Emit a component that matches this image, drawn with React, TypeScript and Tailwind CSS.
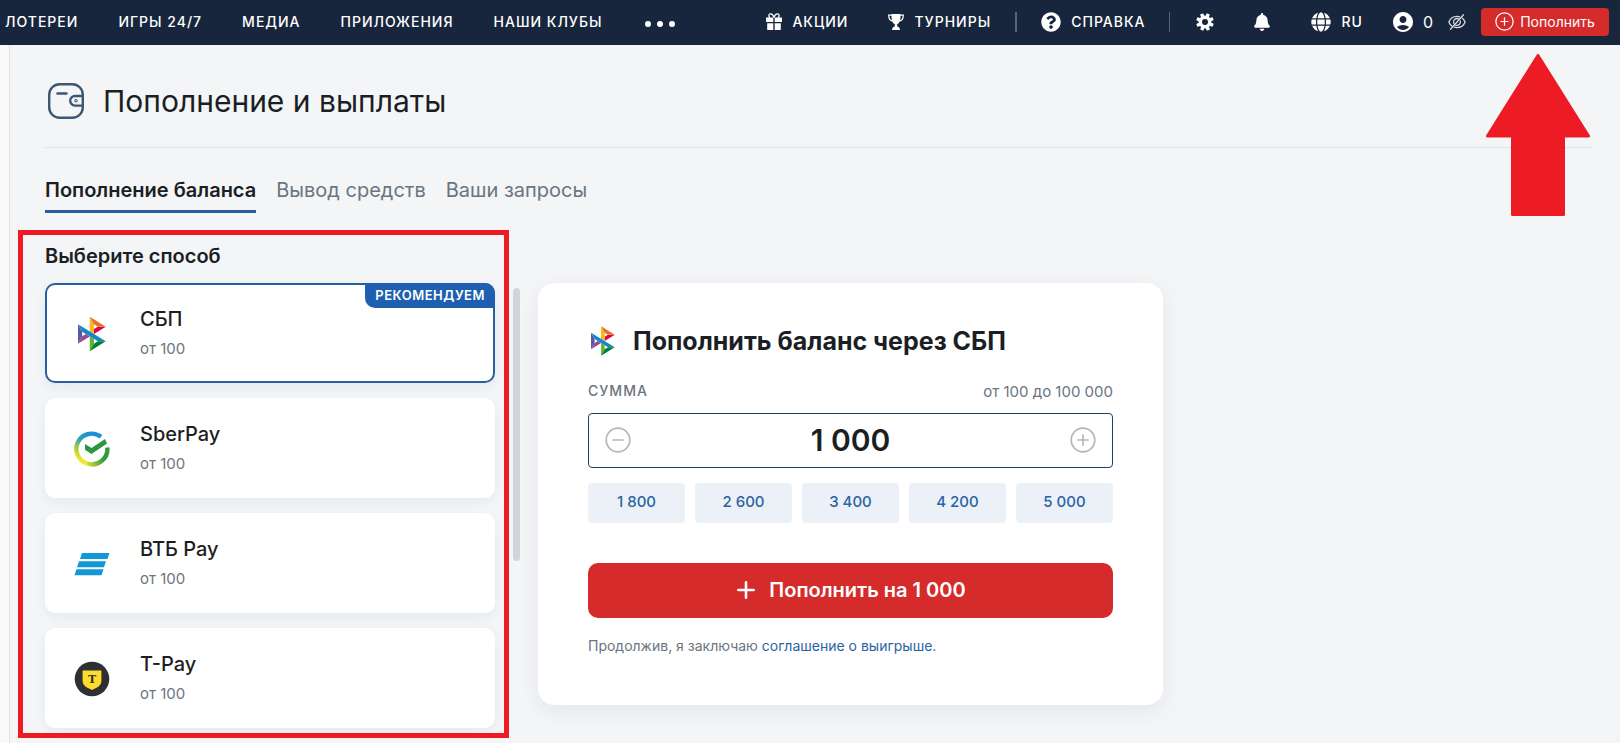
import { useState } from "react";
import type { ReactNode } from "react";
import { FaBell, FaGlobe, FaQuestionCircle } from "react-icons/fa";
import { MdAccountCircle } from "react-icons/md";

const NAV = ["ЛОТЕРЕИ", "ИГРЫ 24/7", "МЕДИА", "ПРИЛОЖЕНИЯ", "НАШИ КЛУБЫ"];
const TABS = ["Пополнение баланса", "Вывод средств", "Ваши запросы"];
const PRESETS = [1800, 2600, 3400, 4200, 5000];
const GEAR_TEETH = [22, 67, 112, 157, 202, 247, 292, 337];

function formatAmount(n: number): string {
  return String(n).replace(/\B(?=(\d{3})+$)/g, "\u00a0");
}

function SbpLogo({ className }: { className: string }) {
  return (
    <svg viewBox="0 0 98 120" className={className} aria-hidden="true">
      <path d="M0 26.12l14.532 25.975v15.844L.017 93.863 0 26.12z" fill="#5B57A2" />
      <path d="M55.797 42.643l13.617-8.346 27.868-.026-41.485 25.414V42.643z" fill="#D90751" />
      <path d="M55.72 25.967l.077 34.39-14.566-8.95V0l14.49 25.967z" fill="#FAB718" />
      <path d="M97.282 34.271l-27.869.026-13.693-8.33L41.231 0l56.05 34.271z" fill="#ED6F26" />
      <path d="M55.797 94.007V77.322l-14.566-8.78.008 51.458 14.558-25.993z" fill="#63B22F" />
      <path d="M69.38 85.737L14.531 52.095 0 26.12l97.223 59.583-27.844.034z" fill="#1487C9" />
      <path d="M41.24 120l14.556-25.993 13.583-8.27 27.843-.034L41.24 120z" fill="#017F36" />
      <path d="M.017 93.863l41.333-25.32-13.896-8.526-12.922 7.922L.017 93.863z" fill="#984995" />
    </svg>
  );
}

function SberLogo() {
  return (
    <svg viewBox="0 0 36 36" className="size-9" fill="none" aria-hidden="true">
      <defs>
        <linearGradient id="sber" x1="22" y1="1" x2="10" y2="34" gradientUnits="userSpaceOnUse">
          <stop offset="0.1" stopColor="#1c8fd6" />
          <stop offset="0.35" stopColor="#2ba5b8" />
          <stop offset="0.6" stopColor="#9fce3a" />
          <stop offset="0.9" stopColor="#f0e72e" />
        </linearGradient>
        <linearGradient id="sber-right" x1="12" y1="34" x2="28" y2="26" gradientUnits="userSpaceOnUse">
          <stop offset="0" stopColor="#e6e532" />
          <stop offset="1" stopColor="#2f9b3f" />
        </linearGradient>
      </defs>
      <path d="M27 5.8A15.3 15.3 0 1 0 13 32.5" stroke="url(#sber)" strokeWidth="4.4" />
      <path d="M13 32.5A15.3 15.3 0 0 0 33.3 16.5" stroke="url(#sber-right)" strokeWidth="4.4" />
      <path d="M11 13v5.700l6.500 4.300L33 12.600l-2-4.600-13.500 9z" fill="#2a9640" />
    </svg>
  );
}

function VtbLogo() {
  return (
    <svg viewBox="0 0 36 36" className="size-9" fill="#1199d6" aria-hidden="true">
      <path d="M8 7H35.500l-2 6H6z" />
      <path d="M5 15.200h27l-2 6H3z" />
      <path d="M2.500 23.200H29.500l-2 6H.500z" />
    </svg>
  );
}

function TPayLogo() {
  return (
    <svg viewBox="0 0 36 36" className="size-9" aria-hidden="true">
      <circle cx="18" cy="18" r="17.300" fill="#2f3033" />
      <path d="M8.600 9.500h18.800v10.200c0 3.400-1.800 5.300-4.400 6.700L18 29l-5-2.600c-2.600-1.400-4.400-3.300-4.400-6.700z" fill="#fddc2d" />
      <text
        x="18"
        y="22"
        textAnchor="middle"
        fontSize="11"
        fontWeight="700"
        fontFamily="DejaVu Serif, serif"
        fill="#2f3033"
      >
        T
      </text>
    </svg>
  );
}

const METHODS: { name: string; logo: ReactNode; recommended?: boolean }[] = [
  { name: "СБП", logo: <SbpLogo className="h-9 w-7" />, recommended: true },
  { name: "SberPay", logo: <SberLogo /> },
  { name: "ВТБ Pay", logo: <VtbLogo /> },
  { name: "T-Pay", logo: <TPayLogo /> },
];

function WalletIcon() {
  return (
    <svg
      viewBox="0 0 36 36"
      className="size-9"
      fill="none"
      stroke="#3d5672"
      strokeWidth="2.4"
      strokeLinecap="round"
      aria-hidden="true"
    >
      <rect x="1.200" y="1.200" width="33.600" height="33.600" rx="10.500" />
      <path d="M9.500 10.500h9" />
      <path d="M34.500 13h-7.500a4.800 4.800 0 0 0 0 9.600h7.500" />
      <circle cx="28" cy="17.800" r="0.500" />
    </svg>
  );
}

function GiftIcon() {
  return (
    <svg viewBox="0 0 16 17" className="h-[17px] w-4" fill="currentColor" aria-hidden="true">
      <path d="M0 4.500h7.300V9H0zM8.700 4.500H16V9H8.700zM1.200 10.200h6.100V17H1.200zM8.700 10.200h6.100V17H8.700z" />
      <path
        d="M8 4.600C7.200 2 5.600.700 4.200.900 2.400 1.200 2.400 4 4.200 4.600M8 4.600C8.800 2 10.400.700 11.800.900c1.800.300 1.800 3.100 0 3.700"
        fill="none"
        stroke="currentColor"
        strokeWidth="1.300"
      />
    </svg>
  );
}

function TrophyIcon() {
  return (
    <svg viewBox="0 0 16 16" className="size-4" fill="currentColor" aria-hidden="true">
      <path d="M3.500 0h9v3.500c0 3.500-1.300 5.700-3.300 6.800v2.200c1.600.300 2.600 1.200 2.800 3.500H4c.200-2.300 1.200-3.200 2.800-3.500v-2.200C4.800 9.200 3.500 7 3.500 3.500z" />
      <path
        d="M4 1.200H.700c0 3.300 1.300 5.400 4 6M12 1.200h3.300c0 3.300-1.300 5.400-4 6"
        fill="none"
        stroke="currentColor"
        strokeWidth="1.200"
      />
    </svg>
  );
}

function GearIcon() {
  return (
    <svg viewBox="0 0 20 20" className="size-5" aria-hidden="true">
      <circle cx="10" cy="10" r="4.700" fill="none" stroke="currentColor" strokeWidth="3.400" />
      {GEAR_TEETH.map((angle) => (
        <rect
          key={angle}
          x="8.300"
          y="1.200"
          width="3.400"
          height="3.500"
          rx="0.600"
          fill="currentColor"
          transform={`rotate(${angle} 10 10)`}
        />
      ))}
    </svg>
  );
}

function HiddenIcon() {
  return (
    <svg
      viewBox="0 0 18 16"
      className="h-4 w-[18px]"
      fill="none"
      stroke="#d5d9e0"
      strokeWidth="1.300"
      strokeLinecap="round"
      aria-hidden="true"
    >
      <path d="M11.600 2.800A8.500 8.500 0 0 0 9 2.400C5 2.400 2 5 .900 8c.600 1.700 1.600 3 2.900 4" />
      <path d="M14.400 4.200c1.200 1 2.200 2.300 2.700 3.800-1.100 3-4.100 5.600-8.100 5.600-.900 0-1.800-.100-2.600-.400" />
      <path d="M5.800 9.500A3.500 3.500 0 0 1 10.500 4.900M12.300 7a3.500 3.500 0 0 1-4.600 4.200" />
      <path d="M2.500 15.200L15.500.800" />
    </svg>
  );
}

function CircleSign({ plus, className }: { plus?: boolean; className: string }) {
  return (
    <svg
      viewBox="0 0 26 26"
      className={className}
      fill="none"
      stroke="currentColor"
      strokeWidth="1.700"
      strokeLinecap="round"
      aria-hidden="true"
    >
      <circle cx="13" cy="13" r="11.800" />
      <path d="M8 13h10" />
      {plus && <path d="M13 8v10" />}
    </svg>
  );
}

function Header() {
  return (
    <header className="flex h-[45px] items-center justify-between bg-[#18263d] pr-[11px] pb-0.5 pl-[5px] text-sm font-medium tracking-[1px] text-white">
      <nav className="flex items-center gap-10">
        {NAV.map((item) => (
          <a key={item} href="#">
            {item}
          </a>
        ))}
        <button type="button" aria-label="Ещё" className="flex gap-1.5 pt-1 pl-0.5">
          <span className="size-1.5 rounded-full bg-white" />
          <span className="size-1.5 rounded-full bg-white" />
          <span className="size-1.5 rounded-full bg-white" />
        </button>
      </nav>

      <div className="flex items-center">
        <a href="#" className="mr-10 flex items-center gap-2.5">
          <GiftIcon />
          АКЦИИ
        </a>
        <a href="#" className="flex items-center gap-2.5">
          <TrophyIcon />
          ТУРНИРЫ
        </a>
        <span className="mx-6 h-5 w-0.5 bg-[#5a6577]" />
        <a href="#" className="flex items-center gap-2.5">
          <FaQuestionCircle className="size-5" />
          СПРАВКА
        </a>
        <span className="mr-[25px] ml-6 h-5 w-px bg-[#5a6577]" />
        <button type="button" aria-label="Настройки" className="mr-[38px]">
          <GearIcon />
        </button>
        <button type="button" aria-label="Уведомления" className="mr-10">
          <FaBell className="size-[18px]" />
        </button>
        <button type="button" className="mr-7 flex items-center gap-2.5">
          <FaGlobe className="size-5" />
          RU
        </button>
        <button type="button" className="mr-3.5 flex items-center gap-2 text-base font-normal">
          <MdAccountCircle className="size-6" />
          0
        </button>
        <button type="button" aria-label="Показать баланс" className="mr-[15px]">
          <HiddenIcon />
        </button>
        <button
          type="button"
          className="flex h-7 w-32 items-center justify-center gap-1.5 rounded bg-[#d52b2a] font-normal tracking-normal"
        >
          <CircleSign plus className="size-[19px]" />
          Пополнить
        </button>
      </div>
    </header>
  );
}

function MethodList() {
  const [selected, setSelected] = useState("СБП");

  return (
    <section className="relative w-[450px] shrink-0">
      <h2 className="mb-[13px] text-xl font-semibold">Выберите способ</h2>
      <ul className="flex flex-col gap-[15px]">
        {METHODS.map(({ name, logo, recommended }) => (
          <li key={name}>
            <button
              type="button"
              onClick={() => setSelected(name)}
              className={
                "relative flex h-[100px] w-full items-center overflow-hidden rounded-[10px] bg-white text-left shadow-[0_4px_12px_rgba(40,50,90,0.06)]" +
                (selected === name ? " ring-2 ring-[#2a5f9e] ring-inset" : "")
              }
            >
              <span className="flex w-[95px] justify-center pt-0.5 pr-0.5">{logo}</span>
              <span className="flex flex-col gap-[5px]">
                <span className="text-xl font-medium">{name}</span>
                <span className="text-[15px] text-[#6b7480]">от 100</span>
              </span>
              {recommended && (
                <span className="absolute top-0 right-0 h-[25px] rounded-bl-[10px] bg-[#1e5fb0] px-2.5 text-[13px] leading-6 font-semibold tracking-[0.5px] text-white">
                  РЕКОМЕНДУЕМ
                </span>
              )}
            </button>
          </li>
        ))}
      </ul>
      <div className="pointer-events-none absolute -top-3 -right-3.5 -bottom-2.5 -left-[27px] border-5 border-[#ed1c24]" />
    </section>
  );
}

function DepositCard() {
  const [amount, setAmount] = useState(1000);

  return (
    <section className="mt-[41px] w-full max-w-[625px] rounded-2xl bg-white px-[50px] pt-10 pb-[49px] shadow-[0_6px_20px_rgba(40,50,90,0.07)]">
      <div className="flex items-center gap-[15px]">
        <span className="flex w-[30px] justify-center">
          <SbpLogo className="h-[30px] w-6" />
        </span>
        <h2 className="text-[25px] leading-9 font-bold">Пополнить баланс через СБП</h2>
      </div>

      <div className="mt-[22px] flex items-start justify-between text-[#6b7480]">
        <label htmlFor="amount" className="text-sm font-medium tracking-[1px]">
          СУММА
        </label>
        <span className="text-[15px]">от 100 до 100 000</span>
      </div>

      <div className="mt-[9px] flex h-[55px] items-center rounded border border-[#1f4263] px-4 text-[#b4b7bb]">
        <button type="button" aria-label="Уменьшить" onClick={() => setAmount((a) => Math.max(100, a - 100))}>
          <CircleSign className="size-[26px]" />
        </button>
        <input
          id="amount"
          type="text"
          inputMode="numeric"
          value={formatAmount(amount)}
          onChange={(e) => setAmount(Number(e.target.value.replace(/\D/g, "")))}
          className="min-w-0 flex-1 bg-transparent text-center text-3xl font-semibold text-[#1b1f24] outline-none"
        />
        <button type="button" aria-label="Увеличить" onClick={() => setAmount((a) => Math.min(100000, a + 100))}>
          <CircleSign plus className="size-[26px]" />
        </button>
      </div>

      <div className="mt-[15px] grid grid-cols-5 gap-2.5">
        {PRESETS.map((p) => (
          <button
            key={p}
            type="button"
            onClick={() => setAmount(p)}
            className="h-10 rounded bg-[#ecf1f8] text-[15px] font-medium text-[#2a63a3]"
          >
            {formatAmount(p)}
          </button>
        ))}
      </div>

      <button
        type="button"
        className="mt-10 flex h-[55px] w-full items-center justify-center gap-3.5 rounded-[10px] bg-[#d52b2a] pl-0.5 text-xl font-semibold text-white"
      >
        <svg
          viewBox="0 0 18 18"
          className="size-[18px]"
          stroke="currentColor"
          strokeWidth="2.600"
          strokeLinecap="round"
          aria-hidden="true"
        >
          <path d="M9 1.300v15.400M1.300 9h15.400" />
        </svg>
        Пополнить на {formatAmount(amount)}
      </button>

      <p className="mt-[18px] text-sm text-[#6b7480]">
        Продолжив, я заключаю{" "}
        <a href="#" className="text-[#2a63a3]">
          соглашение о выигрыше.
        </a>
      </p>
    </section>
  );
}

export default function App() {
  const [tab, setTab] = useState(TABS[0]);

  return (
    <div className="relative flex min-h-screen flex-col bg-[#fafafa] font-['Inter',sans-serif] text-[#1b1f24]">
      <Header />
      <main className="ml-[9px] flex-1 border-l border-[#e0e2e5] bg-[#f3f5f7] pr-[27px] pl-[35px]">
        <div className="flex items-center gap-[19px] border-b border-[#dfe1e4] pt-[38px] pb-7 pl-[3px]">
          <WalletIcon />
          <h1 className="text-3xl font-normal">Пополнение и выплаты</h1>
        </div>

        <div role="tablist" className="mt-7 flex gap-5 text-xl">
          {TABS.map((t) => (
            <button
              key={t}
              type="button"
              role="tab"
              aria-selected={t === tab}
              onClick={() => setTab(t)}
              className={
                t === tab
                  ? "border-b-3 border-[#2a5f9e] pb-1.5 font-semibold"
                  : "border-b-3 border-transparent pb-1.5 text-[#6b7480]"
              }
            >
              {t}
            </button>
          ))}
        </div>

        <div className="mt-[29px] flex items-start pb-[15px]">
          <MethodList />
          <div className="mx-[18px] mt-[46px] h-[273px] w-[7px] shrink-0 rounded-full bg-[#d0d5dc]" />
          <DepositCard />
        </div>
      </main>

      <svg
        viewBox="0 0 104 163"
        className="absolute top-[54px] right-[30px] w-[104px]"
        fill="#ed1c24"
        stroke="#ed1c24"
        strokeWidth="3"
        strokeLinejoin="round"
        aria-hidden="true"
      >
        <path d="M52 1.500L102.500 82H77.500v78.500h-51V82H1.500z" />
      </svg>
    </div>
  );
}
